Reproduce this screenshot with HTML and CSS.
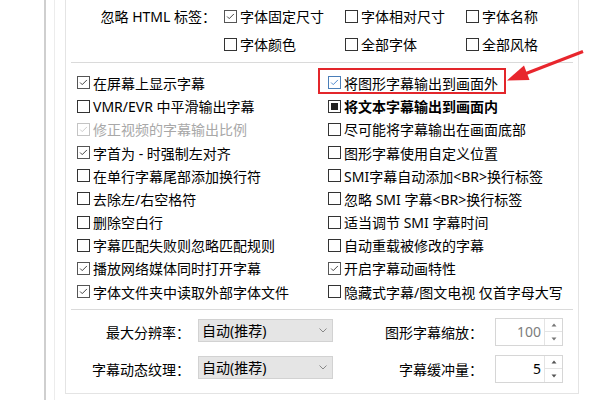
FILE: index.html
```html
<!DOCTYPE html>
<html lang="zh-CN">
<head>
<meta charset="utf-8">
<link rel="stylesheet" href="styles.css">
</head>
<body>
<div class="page">
  <div class="rail">
    <div class="rail2">
      <div class="panel">
        <div class="tags">
          <div class="tags-label">忽略 HTML 标签：</div>
          <div class="item"><span class="cb on"><svg viewBox="0 0 13 13"><polyline points="2.5,6.5 5,9 10.5,3.5"/></svg></span>字体固定尺寸</div>
          <div class="item"><span class="cb"></span>字体相对尺寸</div>
          <div class="item"><span class="cb"></span>字体名称</div>
          <div class="tags-label"></div>
          <div class="item"><span class="cb"></span>字体颜色</div>
          <div class="item"><span class="cb"></span>全部字体</div>
          <div class="item"><span class="cb"></span>全部风格</div>
        </div>
        <div class="sep"></div>
        <div class="opts">
          <div class="item"><span class="cb on"><svg viewBox="0 0 13 13"><polyline points="2.5,6.5 5,9 10.5,3.5"/></svg></span>在屏幕上显示字幕</div>
          <div class="item"><span class="cb"></span>VMR/EVR 中平滑输出字幕</div>
          <div class="item disabled"><span class="cb on"><svg viewBox="0 0 13 13"><polyline points="2.5,6.5 5,9 10.5,3.5"/></svg></span>修正视频的字幕输出比例</div>
          <div class="item"><span class="cb on"><svg viewBox="0 0 13 13"><polyline points="2.5,6.5 5,9 10.5,3.5"/></svg></span>字首为 - 时强制左对齐</div>
          <div class="item"><span class="cb"></span>在单行字幕尾部添加换行符</div>
          <div class="item"><span class="cb"></span>去除左/右空格符</div>
          <div class="item"><span class="cb"></span>删除空白行</div>
          <div class="item"><span class="cb"></span>字幕匹配失败则忽略匹配规则</div>
          <div class="item"><span class="cb on"><svg viewBox="0 0 13 13"><polyline points="2.5,6.5 5,9 10.5,3.5"/></svg></span>播放网络媒体同时打开字幕</div>
          <div class="item"><span class="cb on"><svg viewBox="0 0 13 13"><polyline points="2.5,6.5 5,9 10.5,3.5"/></svg></span>字体文件夹中读取外部字体文件</div>

          <div class="item focus"><span class="cb on"><svg viewBox="0 0 13 13"><polyline points="2.5,6.5 5,9 10.5,3.5"/></svg></span>将图形字幕输出到画面外</div>
          <div class="item bold"><span class="cb mixed"><span class="fill"></span></span>将文本字幕输出到画面内</div>
          <div class="item"><span class="cb"></span>尽可能将字幕输出在画面底部</div>
          <div class="item"><span class="cb"></span>图形字幕使用自定义位置</div>
          <div class="item"><span class="cb"></span>SMI字幕自动添加&lt;BR&gt;换行标签</div>
          <div class="item"><span class="cb"></span>忽略 SMI 字幕&lt;BR&gt;换行标签</div>
          <div class="item"><span class="cb"></span>适当调节 SMI 字幕时间</div>
          <div class="item"><span class="cb"></span>自动重载被修改的字幕</div>
          <div class="item"><span class="cb on"><svg viewBox="0 0 13 13"><polyline points="2.5,6.5 5,9 10.5,3.5"/></svg></span>开启字幕动画特性</div>
          <div class="item"><span class="cb"></span>隐藏式字幕/图文电视 仅首字母大写</div>
        </div>
        <div class="sep sep2"></div>
        <div class="bottom">
          <div class="blabel lbl-left">最大分辨率：</div>
          <div class="select"><span>自动(推荐)</span><svg class="chev" viewBox="0 0 8 5"><polyline points="0.5,0.5 4,4 7.5,0.5"/></svg></div>
          <div class="blabel lbl-right">图形字幕缩放：</div>
          <div class="spin dim"><span class="val">100</span><span class="btns"><span class="up"><svg viewBox="0 0 6 4"><polygon points="3,0.5 5.5,3.5 0.5,3.5"/></svg></span><span class="down"><svg viewBox="0 0 6 4"><polygon points="0.5,0.5 5.5,0.5 3,3.5"/></svg></span></span></div>

          <div class="blabel lbl-left">字幕动态纹理：</div>
          <div class="select"><span>自动(推荐)</span><svg class="chev" viewBox="0 0 8 5"><polyline points="0.5,0.5 4,4 7.5,0.5"/></svg></div>
          <div class="blabel lbl-right">字幕缓冲量：</div>
          <div class="spin"><span class="val">5</span><span class="btns"><span class="up"><svg viewBox="0 0 6 4"><polygon points="3,0.5 5.5,3.5 0.5,3.5"/></svg></span><span class="down"><svg viewBox="0 0 6 4"><polygon points="0.5,0.5 5.5,0.5 3,3.5"/></svg></span></span></div>
        </div>
      </div>
    </div>
  </div>
  <div class="callout"></div>
  <svg class="arrow" viewBox="0 0 600 400">
    <line x1="583" y1="51.5" x2="526" y2="73.5"/>
    <polygon points="507,80.5 529.5,80 524,65.5"/>
  </svg>
</div>
</body>
</html>
```

FILE: styles.css
```css
* { box-sizing: border-box; }
html, body { margin: 0; padding: 0; background: #fff; }
body {
  font-family: "Noto Sans", "Noto Sans CJK SC", sans-serif;
  font-size: 14px;
  color: #000;
}
.page {
  position: relative;
  width: 600px;
  height: 400px;
  overflow: hidden;
}
.rail {
  margin-left: 44px;
  height: 400px;
  border-left: 2px solid #cfcfcf;
  padding-left: 8px;
}
.rail2 {
  height: 400px;
  border-left: 1px solid #ececec;
  padding-left: 10px;
}
.panel {
  width: 514px;
  height: 394px;
  border: 1px solid #e4e4e4;
  border-top: none;
  padding: 0 5px;
}
.tags {
  display: grid;
  grid-template-columns: 153px 121px 121px 1fr;
  grid-template-rows: 28px 28px;
  padding-top: 2px;
}
.tags-label {
  padding-right: 8px;
  display: flex;
  align-items: center;
  justify-content: flex-end;
  white-space: nowrap;
}
.item {
  display: flex;
  align-items: center;
  white-space: nowrap;
}
.cb {
  flex: none;
  width: 13px;
  height: 13px;
  border: 1px solid #333;
  margin-right: 3px;
  background: #fff;
  display: flex;
  align-items: center;
  justify-content: center;
}
.cb svg {
  width: 11px;
  height: 11px;
  fill: none;
  stroke: #222;
  stroke-width: 1;
}
.cb.on { border-color: #555; }
.cb.mixed .fill {
  width: 7px;
  height: 7px;
  background: #222;
}
.disabled { color: #a8a8a8; }
.disabled .cb { border-color: #c4c4c4; }
.disabled .cb svg { stroke: #c4c4c4; }
.focus .cb { border-color: #4a7eb8; }
.focus .cb svg { stroke: #2f73c4; }
.bold { font-weight: bold; }
.sep {
  height: 1px;
  background: #dadada;
  margin-top: 4px;
}
.opts {
  display: grid;
  grid-template-columns: 251px 1fr;
  grid-template-rows: repeat(10, 23.2px);
  grid-auto-flow: column;
  padding-left: 6px;
  margin-top: 8.4px;
}
.sep2 { margin-top: 5.6px; }
.bottom {
  display: grid;
  grid-template-columns: 127px 135px 162px 68px;
  grid-template-rows: 37px 37px;
  margin-top: 4px;
}
.blabel {
  display: flex;
  align-items: center;
  justify-content: flex-end;
  white-space: nowrap;
}
.lbl-left { padding-right: 8px; }
.lbl-right { padding-right: 12px; }
.select {
  align-self: start;
  margin-top: 5px;
  height: 23px;
  background: #e5e5e5;
  border: 1px solid #d2d2d2;
  display: flex;
  align-items: center;
  justify-content: space-between;
  padding: 0 5px 0 3px;
}
.chev {
  width: 8px;
  height: 5px;
  fill: none;
  stroke: #888;
  stroke-width: 1;
}
.spin {
  align-self: start;
  margin-top: 4px;
  height: 28px;
  border: 1px solid #d6d6d6;
  display: flex;
  background: #fff;
}
.spin .val {
  flex: 1;
  display: flex;
  align-items: center;
  justify-content: flex-end;
  padding-right: 3px;
}
.spin.dim .val { color: #7d7d7d; }
.btns {
  width: 18px;
  display: flex;
  flex-direction: column;
  border-left: 1px solid #e4e4e4;
}
.btns .up, .btns .down {
  flex: 1;
  display: flex;
  align-items: center;
  justify-content: center;
}
.btns .up { border-bottom: 1px solid #e4e4e4; }
.btns svg { width: 6px; height: 4px; fill: #555; }
.spin.dim .btns svg { fill: #777; }
.callout {
  position: absolute;
  left: 318px;
  top: 68px;
  width: 188px;
  height: 26px;
  border: 2px solid #e3262b;
}
.arrow {
  position: absolute;
  left: 0;
  top: 0;
  width: 600px;
  height: 400px;
  pointer-events: none;
}
.arrow line { stroke: #e8262d; stroke-width: 3; }
.arrow polygon { fill: #e8262d; }
```
